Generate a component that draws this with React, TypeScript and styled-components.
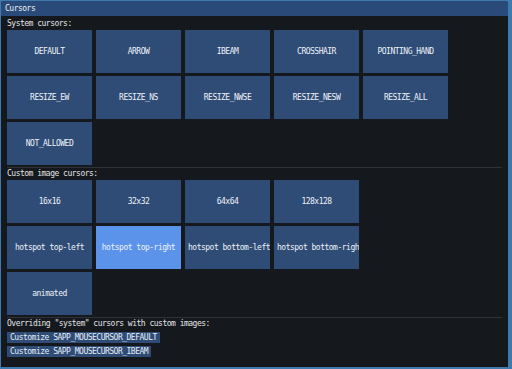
import styled, { createGlobalStyle } from "styled-components";

const GlobalStyle = createGlobalStyle`
  html, body {
    margin: 0;
    padding: 0;
    background: #3e7aae;
  }
  body {
    width: 512px;
    height: 369px;
    overflow: hidden;
    font-family: "DejaVu Sans Mono", "Liberation Mono", monospace;
    font-size: 8px;
    letter-spacing: -0.5px;
    color: #e4e6e8;
  }
`;

const systemCursors = [
  "DEFAULT",
  "ARROW",
  "IBEAM",
  "CROSSHAIR",
  "POINTING_HAND",
  "RESIZE_EW",
  "RESIZE_NS",
  "RESIZE_NWSE",
  "RESIZE_NESW",
  "RESIZE_ALL",
  "NOT_ALLOWED",
];

const customCursors = [
  "16x16",
  "32x32",
  "64x64",
  "128x128",
  "hotspot top-left",
  "hotspot top-right",
  "hotspot bottom-left",
  "hotspot bottom-right",
  "animated",
];

const App = () => {
  return (
    <>
      <GlobalStyle />
      <Window>
        <TitleBar>Cursors</TitleBar>
        <Content>
          <Label>System cursors:</Label>
          <Grid $cols={5}>
            {systemCursors.map((name) => (
              <CursorButton key={name}>
                <span>{name}</span>
              </CursorButton>
            ))}
          </Grid>
          <Separator />
          <Label>Custom image cursors:</Label>
          <Grid $cols={4}>
            {customCursors.map((name) => (
              <CursorButton key={name} $active={name === "hotspot top-right"}>
                <span>{name}</span>
              </CursorButton>
            ))}
          </Grid>
          <Separator />
          <Label>Overriding "system" cursors with custom images:</Label>
          <SmallList>
            <SmallButton>Customize SAPP_MOUSECURSOR_DEFAULT</SmallButton>
            <SmallButton>Customize SAPP_MOUSECURSOR_IBEAM</SmallButton>
          </SmallList>
        </Content>
      </Window>
    </>
  );
};

export default App;

const Window = styled.div`
  margin: 1px 4px 0 1px;
  height: 366px;
  background: #15181c;
  border-radius: 3px 3px 0 0;
  overflow: hidden;
  display: flex;
  flex-direction: column;
`;

const TitleBar = styled.div`
  height: 15px;
  line-height: 15px;
  padding-left: 4px;
  background: #2a4a79;
  color: #f0f2f4;
  flex-shrink: 0;
`;

const Content = styled.div`
  padding: 3px 6px 0;
  display: flex;
  flex-direction: column;
`;

const Label = styled.div`
  height: 10px;
  line-height: 10px;
  margin-bottom: 1px;
  white-space: nowrap;
`;

const Grid = styled.div<{ $cols: number }>`
  display: grid;
  grid-template-columns: repeat(${({ $cols }) => $cols}, 85px);
  grid-auto-rows: 43px;
  column-gap: 4px;
  row-gap: 3px;
`;

const CursorButton = styled.div<{ $active?: boolean }>`
  display: flex;
  align-items: center;
  justify-content: safe center;
  padding: 0 3px;
  overflow: hidden;
  white-space: nowrap;
  background: ${({ $active }) => ($active ? "#5b92ea" : "#2e4c75")};
  color: #eef2fa;

  span {
    flex-shrink: 0;
  }
`;

const Separator = styled.div`
  height: 1px;
  margin: 2px 0 1px;
  background: #2e3337;
`;

const SmallList = styled.div`
  display: flex;
  flex-direction: column;
  align-items: flex-start;
  gap: 3px;
  margin-top: 2px;
`;

const SmallButton = styled.div`
  height: 11px;
  line-height: 11px;
  padding: 0 3px;
  background: #2e4c75;
  color: #e8eef8;
  white-space: nowrap;
`;
